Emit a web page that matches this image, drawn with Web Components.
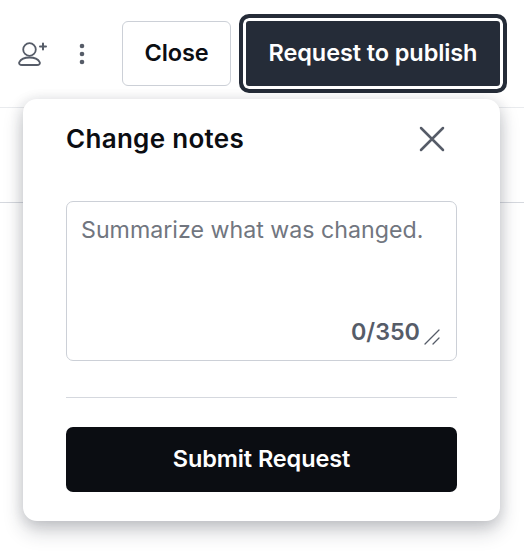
<!DOCTYPE html>
<html lang="en">
<head>
<meta charset="utf-8">
<title>Change notes</title>
<style>
  html, body { margin: 0; background: #fff; }
  body { font-family: Inter, "Liberation Sans", sans-serif; }
</style>
</head>
<body>
<publish-bar></publish-bar>
<sub-bar></sub-bar>
<notes-popover></notes-popover>

<script>
class PublishBar extends HTMLElement {
  constructor() {
    super();
    this.attachShadow({ mode: 'open' });
    this.shadowRoot.innerHTML = `
      <style>
        :host {
          display: flex;
          box-sizing: border-box;
          height: 108px;
          padding: 14px 17px 0 18px;
          align-items: flex-start;
          border-bottom: 1px solid #e9ebee;
        }
        .icon { display: block; flex: none; color: #565c68; }
        .add { margin: 27px 0 0 0; }
        .more { margin: 28px 0 0 31px; }
        button {
          font: inherit;
          font-weight: 600;
          font-size: 23.500px;
          letter-spacing: -0.1px;
          cursor: pointer;
          box-sizing: border-box;
          padding: 0 0 3px;
        }
        .close {
          width: 109px;
          height: 65px;
          margin: 7px 0 0 36px;
          color: #0b0d12;
          background: #fff;
          border: 1px solid #ccd0d7;
          border-radius: 6px;
        }
        .request {
          width: 268px;
          height: 79px;
          margin-left: 8px;
          color: #fff;
          background: #252c38;
          border: 4px solid #252c38;
          border-radius: 10px;
          box-shadow: inset 0 0 0 3px #fff;
        }
      </style>
      <svg class="icon add" width="29" height="26" viewBox="0 0 29 26" fill="none" stroke="currentColor" stroke-width="1.800" stroke-linecap="round">
        <circle cx="11.500" cy="8.500" r="6.300"/>
        <path d="M4 24c-2.300 0-3.500-1.400-2.600-3C3 18 7 16.500 11.500 16.500S20 18 21.600 21c.9 1.600-.3 3-2.600 3H4z"/>
        <path d="M22 5.500h6M25 2.500v6" stroke-width="2"/>
      </svg>
      <svg class="icon more" width="8" height="24" viewBox="0 0 8 24" fill="currentColor">
        <circle cx="4" cy="4" r="2.300"/>
        <circle cx="4" cy="12" r="2.300"/>
        <circle cx="4" cy="20" r="2.300"/>
      </svg>
      <button class="close" type="button">Close</button>
      <button class="request" type="button">Request to publish</button>
    `;
  }
}

class SubBar extends HTMLElement {
  constructor() {
    super();
    this.attachShadow({ mode: 'open' });
    this.shadowRoot.innerHTML = `
      <style>
        :host {
          display: block;
          box-sizing: border-box;
          height: 95px;
          border-bottom: 1px solid #d5d8de;
        }
      </style>
    `;
  }
}

class NotesPopover extends HTMLElement {
  constructor() {
    super();
    this.attachShadow({ mode: 'open' });
    this.shadowRoot.innerHTML = `
      <style>
        :host {
          position: absolute;
          left: 23px;
          top: 99px;
          width: 477px;
          height: 421.500px;
          box-sizing: border-box;
          padding: 0 43px;
          display: flex;
          flex-direction: column;
          background: #fff;
          border-radius: 14px;
          box-shadow: 0 10px 20px rgba(30, 38, 52, 0.22), 0 2px 14px rgba(30, 38, 52, 0.14);
        }
        header {
          display: flex;
          justify-content: space-between;
          align-items: center;
          height: 80px;
          flex: none;
        }
        h2 {
          margin: -2px 0 0;
          font-size: 26px;
          font-weight: 600;
          letter-spacing: 0.3px;
          color: #0b0d12;
        }
        .x { display: block; margin-right: 12px; color: #565c68; }
        .field {
          position: relative;
          box-sizing: border-box;
          height: 160px;
          margin-top: 22px;
          padding: 14px 14px;
          border: 1px solid #ccd0d7;
          border-radius: 7px;
          font-size: 23.200px;
          color: #71767f;
          white-space: nowrap;
        }
        .count {
          position: absolute;
          right: 36px;
          bottom: 14px;
          font-size: 23.300px;
          font-weight: 600;
          color: #565c68;
        }
        .grip { position: absolute; right: 16px; bottom: 15px; display: block; }
        hr {
          margin: 36px 0 0;
          border: 0;
          border-top: 1px solid #d5d8de;
        }
        button {
          margin-top: 29px;
          height: 65px;
          padding: 0 0 3px;
          font: inherit;
          font-size: 23.500px;
          font-weight: 600;
          letter-spacing: -0.1px;
          color: #fff;
          background: #0b0d12;
          border: 0;
          border-radius: 7px;
          cursor: pointer;
        }
      </style>
      <header>
        <h2>Change notes</h2>
        <svg class="x" width="26" height="26" viewBox="0 0 26 26" fill="none" stroke="currentColor" stroke-width="2.500" stroke-linecap="round">
          <path d="M2 2l22 22M24 2L2 24"/>
        </svg>
      </header>
      <div class="field">
        Summarize what was changed.
        <span class="count">0/350</span>
        <svg class="grip" width="16" height="16" viewBox="0 0 16 16" fill="none" stroke="#565c68" stroke-width="1.300" stroke-linecap="round">
          <path d="M1 15L15 1M9 15l6-6"/>
        </svg>
      </div>
      <hr>
      <button type="button">Submit Request</button>
    `;
  }
}

customElements.define('publish-bar', PublishBar);
customElements.define('sub-bar', SubBar);
customElements.define('notes-popover', NotesPopover);
</script>
</body>
</html>
